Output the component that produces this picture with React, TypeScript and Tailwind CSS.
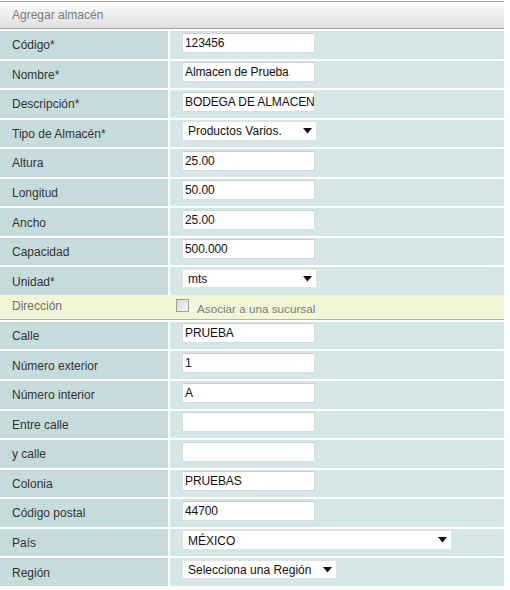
import React from "react";

type Row = { label: string; kind?: "input" | "select"; value: string; w?: number };

const topRows: Row[] = [
  { label: "Código*", value: "123456" },
  { label: "Nombre*", value: "Almacen de Prueba" },
  { label: "Descripción*", value: "BODEGA DE ALMACENAMIENTO" },
  { label: "Tipo de Almacén*", kind: "select", value: "Productos Varios.", w: 135 },
  { label: "Altura", value: "25.00" },
  { label: "Longitud", value: "50.00" },
  { label: "Ancho", value: "25.00" },
  { label: "Capacidad", value: "500.000" },
  { label: "Unidad*", kind: "select", value: "mts", w: 135 },
];

const bottomRows: Row[] = [
  { label: "Calle", value: "PRUEBA" },
  { label: "Número exterior", value: "1" },
  { label: "Número interior", value: "A" },
  { label: "Entre calle", value: "" },
  { label: "y calle", value: "" },
  { label: "Colonia", value: "PRUEBAS" },
  { label: "Código postal", value: "44700" },
  { label: "País", kind: "select", value: "MÉXICO", w: 270 },
  { label: "Región", kind: "select", value: "Selecciona una Región", w: 155 },
];

function Arrow() {
  return (
    <svg width="9" height="6" viewBox="0 0 9 6" className="shrink-0">
      <polygon points="0,0 9,0 4.5,5.5" fill="#111" />
    </svg>
  );
}

function FormRow({ row }: { row: Row }) {
  return (
    <div className="flex h-[27.56px] gap-[2.5px]">
      <div className="w-[167.5px] shrink-0 bg-[#c6dcdc] flex items-center pl-[12px] pt-[1px] text-[#333]">
        {row.label}
      </div>
      <div className="flex-1 bg-[#d5e6e6] pl-[12px] pt-[1.5px]">
        {row.kind === "select" ? (
          <div
            className="h-[19.5px] bg-white border border-[#e2e2e2] flex items-center justify-between pl-[5px] pr-[4px] text-[#111] whitespace-nowrap"
            style={{ width: row.w }}
          >
            <span className="pt-[1px]">{row.value}</span>
            <Arrow />
          </div>
        ) : (
          <div className="w-[133px] h-[20px] bg-white border border-[#dadada] border-t-[#cdcdcd] flex items-center pl-[2px] text-[#111] whitespace-nowrap overflow-hidden tracking-[-0.1px]">
            <span>{row.value}</span>
          </div>
        )}
      </div>
    </div>
  );
}

export default function App() {
  return (
    <div className="w-[510px] h-[590px] bg-white font-['Liberation_Sans',Arial,sans-serif] text-[12px] leading-none overflow-hidden">
      <div className="w-[504px] pt-[1px]">
        <div className="h-[28px] border-t border-t-[#a6a6a6] border-b border-b-[#a3a3a3] bg-gradient-to-b from-[#fbfbfb] to-[#e0e0e0] flex items-center pl-[12px] text-[#7a7a7a]">
          Agregar almacén
        </div>
        <div className="mt-[2px] flex flex-col gap-[2px]">
          {topRows.map((r) => (
            <FormRow key={r.label} row={r} />
          ))}
        </div>
        <div className="h-[25px] bg-[#f1f6d6] border-b border-b-[#b1b5a3] flex items-center">
          <div className="w-[176px] pl-[12px] text-[#6f6f6f] pb-[1px]">Dirección</div>
          <div className="w-[13px] h-[13px] border border-[#9d9d9d] bg-gradient-to-br from-[#d6d6d6] to-[#f7f7f7] mb-[2px]" />
          <div className="pl-[8px] pt-[4px] text-[#7c7c7c] text-[11.7px]">Asociar a una sucursal</div>
        </div>
        <div className="mt-[2px] flex flex-col gap-[2px]">
          {bottomRows.map((r) => (
            <FormRow key={r.label} row={r} />
          ))}
        </div>
      </div>
    </div>
  );
}
